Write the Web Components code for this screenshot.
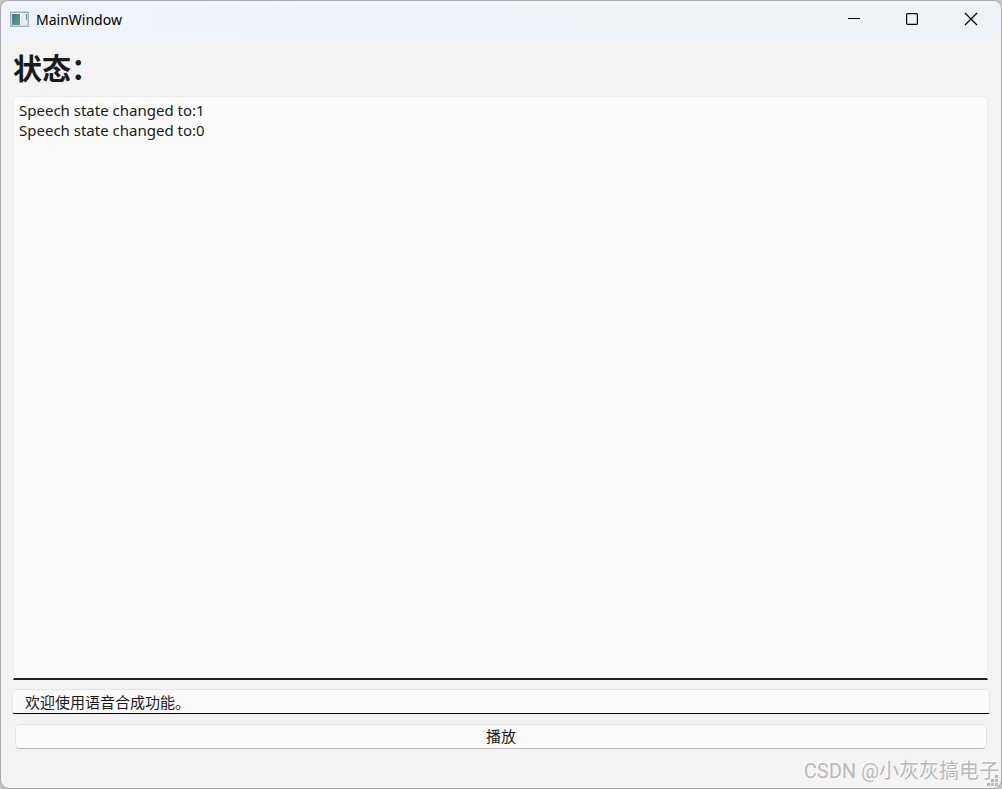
<!DOCTYPE html>
<html lang="zh-CN">
<head>
<meta charset="utf-8">
<title>MainWindow</title>
<style>
html, body { margin: 0; height: 100%; background: #c4c4c4; }
body { font-family: "Noto Sans", "Noto Sans CJK SC", sans-serif; color: #1a1a1a; }
</style>
</head>
<body>
<app-window>
  <title-bar slot="title">MainWindow</title-bar>
  <state-heading>状态：</state-heading>
  <log-view></log-view>
  <speech-input></speech-input>
  <play-button>播放</play-button>
  <status-bar slot="status">CSDN @小灰灰搞电子</status-bar>
</app-window>
<script>
function define(name, html) {
  const template = document.createElement('template');
  template.innerHTML = html;
  customElements.define(name, class extends HTMLElement {
    constructor() {
      super();
      this.attachShadow({ mode: 'open' }).append(template.content.cloneNode(true));
    }
  });
}

define('app-window', `
<style>
:host { display: flex; flex-direction: column; box-sizing: border-box; height: 100vh; border: 1px solid #a9a9a9; border-radius: 9px; background: #f3f3f3; overflow: hidden; }
main { flex: 1; min-height: 0; display: flex; flex-direction: column; padding: 10px 13px 0 12px; }
</style>
<slot name="title"></slot>
<main><slot></slot></main>
<slot name="status"></slot>`);

define('title-bar', `
<style>
:host { display: flex; align-items: center; height: 36px; padding-left: 9px; background: linear-gradient(90deg, #eff3fa, #eef3f8); color: #000; font-size: 14px; line-height: 20px; }
.icon { width: 19px; height: 16px; margin-right: 7px; }
.name { flex: 1; padding-top: 1px; }
button { width: 58px; height: 36px; padding: 0; border: 0; background: none; display: grid; place-items: center; }
button:last-child { width: 60px; }
button svg { width: 14px; height: 14px; }
</style>
<svg class="icon" viewBox="0 0 19 16" aria-hidden="true">
  <defs><linearGradient id="g" x1="0" y1="0" x2="1" y2="1"><stop offset="0" stop-color="#4574a0"/><stop offset="1" stop-color="#57a77c"/></linearGradient></defs>
  <rect x=".75" y="1.25" width="17.5" height="14" fill="#f8f9fa" stroke="#a0a6ae" stroke-width="1.3"/>
  <rect x="2" y="3" width="8" height="11" fill="url(#g)"/>
  <rect x="11" y="3" width="6" height="11" fill="#e7eeee"/>
  <rect x="16" y="3" width="1" height="6" fill="#5a9a85"/>
</svg>
<span class="name"><slot></slot></span>
<button aria-label="Minimize"><svg viewBox="0 0 14 14"><path d="M1 6.5h12" stroke="#000"/></svg></button>
<button aria-label="Maximize"><svg viewBox="0 0 14 14"><rect x="1.6" y="1.6" width="10.8" height="10.8" rx="1" fill="none" stroke="#000" stroke-width="1.2"/></svg></button>
<button aria-label="Close"><svg viewBox="0 0 14 14"><path d="M1 1l12 12M13 1L1 13" stroke="#000" stroke-width="1.2"/></svg></button>`);

define('state-heading', `
<style>
:host { display: block; }
h1 { margin: 0; font: 700 29px/40px "Noto Sans CJK SC", sans-serif; }
</style>
<h1><slot></slot></h1>`);

define('log-view', `
<style>
:host { display: flex; flex: 1; min-height: 0; margin-top: 9px; }
textarea { flex: 1; box-sizing: border-box; margin: 0; padding: 3px 5px; border: 1px solid #ededed; border-bottom: 2px solid #222; border-radius: 5px 5px 0 0; background: #fbfbfb; resize: none; outline: 0; color: #1a1a1a; font: 15px/20px "Noto Sans", sans-serif; }
</style>
<textarea readonly aria-label="状态">Speech state changed to:1
Speech state changed to:0</textarea>`);

define('speech-input', `
<style>
:host { display: flex; margin-top: 9px; }
input { flex: 1; min-width: 0; box-sizing: border-box; height: 25px; margin: 0 -2px 0 -1px; padding: 0 12px; border: 1px solid #e5e5e5; border-bottom: 1px solid #000; border-radius: 5px 5px 2px 2px; background: #fbfbfb; outline: 0; color: #1a1a1a; font: 15px/20px "Noto Sans CJK SC", sans-serif; }
</style>
<input type="text" value="欢迎使用语音合成功能。" aria-label="语音文本">`);

define('play-button', `
<style>
:host { display: flex; margin-top: 10px; padding: 0 1px 0 2px; }
button { flex: 1; height: 25px; padding: 0 0 1px; border: 1px solid #e5e5e5; border-bottom-color: #bdbdbd; border-radius: 5px; background: #fbfbfb; color: #1a1a1a; font: 15px/20px "Noto Sans CJK SC", sans-serif; }
</style>
<button type="button"><slot></slot></button>`);

define('status-bar', `
<style>
:host { display: flex; justify-content: flex-end; align-items: center; box-sizing: border-box; height: 39px; padding: 4px 2px 0 0; position: relative; color: #b9b9b9; font: 20px/28px Roboto, "Noto Sans CJK SC", sans-serif; text-shadow: -1px -1px 0 #fff; }
svg { position: absolute; right: 2px; bottom: 1px; width: 12px; height: 12px; }
</style>
<span><slot></slot></span>
<svg viewBox="0 0 12 12" fill="#b8b8b8" aria-hidden="true"><path d="M8 0h3v3h-3zM4 4h3v3h-3zM8 4h3v3h-3zM0 8h3v3h-3zM4 8h3v3h-3zM8 8h3v3h-3z"/></svg>`);
</script>
</body>
</html>
